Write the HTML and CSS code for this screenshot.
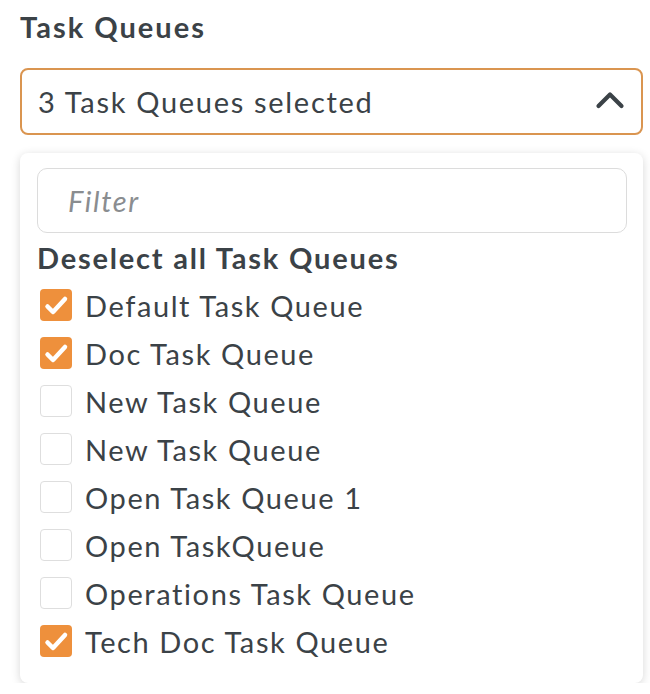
FILE: index.html
```html
<!DOCTYPE html>
<html lang="en">
<head>
  <meta charset="UTF-8" />
  <title>Task Queues</title>
  <link rel="stylesheet" href="styles.css">
</head>
<body>
  <div class="field">
    <label class="field-label">Task Queues</label>

    <button class="select" type="button" aria-expanded="true">
      <span class="select-value">3 Task Queues selected</span>
      <svg class="chevron" width="30" height="18" viewBox="0 0 30 18" aria-hidden="true">
        <path d="M3.5 15 L15 3.5 L26.5 15" fill="none" stroke="#3b4247" stroke-width="4.2" stroke-linecap="round" stroke-linejoin="round"/>
      </svg>
    </button>

    <div class="menu" role="listbox">
      <input class="filter" type="text" placeholder="Filter" />
      <div class="deselect">Deselect all Task Queues</div>
      <ul class="options">
        <li class="option checked"><span class="box"></span>Default Task Queue</li>
        <li class="option checked"><span class="box"></span>Doc Task Queue</li>
        <li class="option"><span class="box"></span>New Task Queue</li>
        <li class="option"><span class="box"></span>New Task Queue</li>
        <li class="option"><span class="box"></span>Open Task Queue 1</li>
        <li class="option"><span class="box"></span>Open TaskQueue</li>
        <li class="option"><span class="box"></span>Operations Task Queue</li>
        <li class="option checked"><span class="box"></span>Tech Doc Task Queue</li>
      </ul>
    </div>
  </div>
</body>
</html>
```

FILE: styles.css
```css
body {
  margin: 0;
  background: #fff;
  font-family: 'Lato', 'Liberation Sans', sans-serif;
  color: #3b4247;
}
.field {
  padding: 9px 7px 0 20px;
}
.field-label {
  display: block;
  font-size: 29px;
  font-weight: bold;
  letter-spacing: 2px;
  line-height: 36px;
}
.select {
  margin-top: 23px;
  width: 100%;
  height: 67px;
  display: flex;
  align-items: center;
  justify-content: space-between;
  padding: 0 16px 0 16px;
  box-sizing: border-box;
  background: #fff;
  border: 2px solid #da9550;
  border-radius: 8px;
  font-family: inherit;
  font-size: 29px;
  letter-spacing: 1.7px;
  color: #3b4247;
}
.chevron {
  display: block;
  margin-bottom: 4px;
}
/* dropdown */
.menu {
  margin-top: 18px;
  background: #fff;
  border-radius: 8px;
  box-shadow: 0 2px 10px rgba(0, 0, 0, 0.16);
  padding: 15px 16px 18px 17px;
}
.filter {
  display: block;
  width: 100%;
  height: 65px;
  box-sizing: border-box;
  border: 1.5px solid #dcdcdc;
  border-radius: 10px;
  padding: 0 20px 0 30px;
  font-family: inherit;
  font-size: 29px;
  letter-spacing: 1.6px;
  color: #3b4247;
  outline: none;
}
.filter::placeholder {
  color: #8a8d90;
  font-style: italic;
}
.deselect {
  height: 48px;
  line-height: 50px;
  font-size: 29px;
  font-weight: bold;
  letter-spacing: 1.8px;
}
.options {
  list-style: none;
  margin: 0;
  padding: 0;
}
.option {
  height: 48px;
  display: flex;
  align-items: center;
  gap: 13px;
  padding-left: 3px;
  font-size: 29px;
  letter-spacing: 1.6px;
}
.box {
  width: 32px;
  height: 32px;
  box-sizing: border-box;
  border: 1.5px solid #dedede;
  border-radius: 4px;
  flex-shrink: 0;
}
.option.checked .box {
  border: none;
  background: #ee903c url("data:image/svg+xml,%3Csvg xmlns='http://www.w3.org/2000/svg' viewBox='0 0 32 32'%3E%3Cpath d='M7.5 17.5 L13 23 L25 10' fill='none' stroke='%23fff' stroke-width='4.5' stroke-linecap='round' stroke-linejoin='round'/%3E%3C/svg%3E") center / 100% no-repeat;
}
```
